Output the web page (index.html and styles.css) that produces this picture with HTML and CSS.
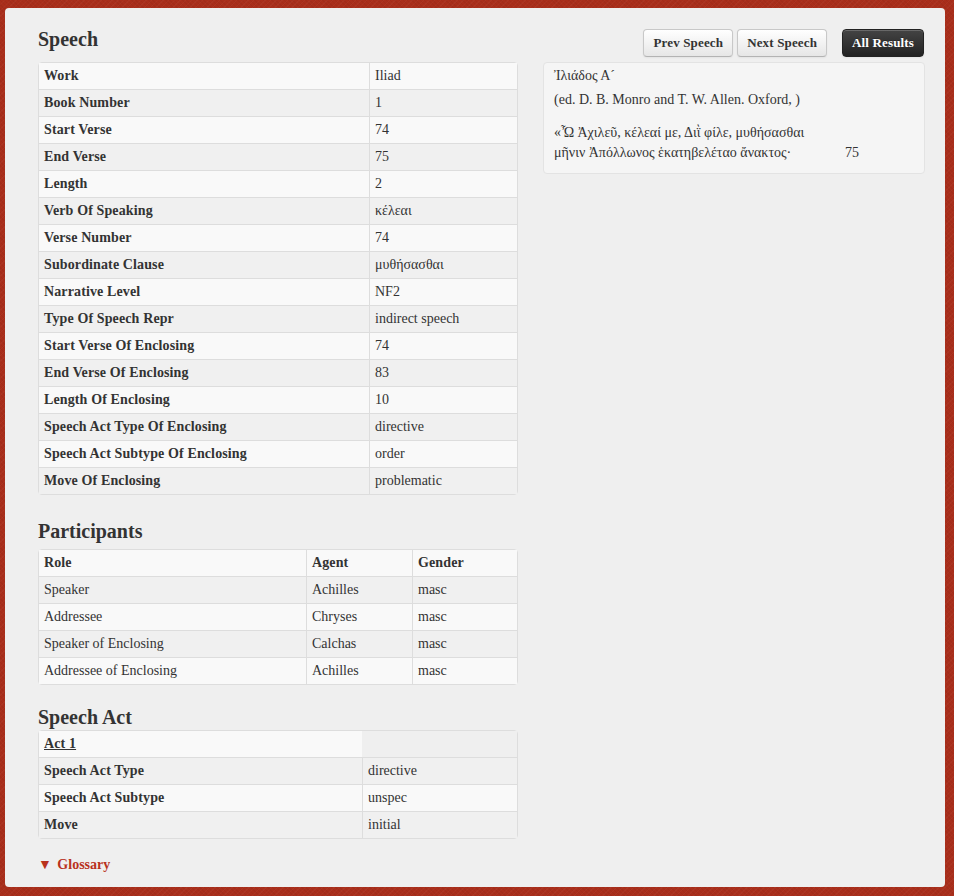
FILE: index.html
```html
<!DOCTYPE html>
<html>
<head>
<meta charset="utf-8">
<link rel="stylesheet" href="styles.css">
</head>
<body>
<div class="page">
  <div class="left">
    <h3 class="h-speech">Speech</h3>
    <table class="tbl kv">
      <tr><th>Work</th><td>Iliad</td></tr>
      <tr><th>Book Number</th><td>1</td></tr>
      <tr><th>Start Verse</th><td>74</td></tr>
      <tr><th>End Verse</th><td>75</td></tr>
      <tr><th>Length</th><td>2</td></tr>
      <tr><th>Verb Of Speaking</th><td>κέλεαι</td></tr>
      <tr><th>Verse Number</th><td>74</td></tr>
      <tr><th>Subordinate Clause</th><td>μυθήσασθαι</td></tr>
      <tr><th>Narrative Level</th><td>NF2</td></tr>
      <tr><th>Type Of Speech Repr</th><td>indirect speech</td></tr>
      <tr><th>Start Verse Of Enclosing</th><td>74</td></tr>
      <tr><th>End Verse Of Enclosing</th><td>83</td></tr>
      <tr><th>Length Of Enclosing</th><td>10</td></tr>
      <tr><th>Speech Act Type Of Enclosing</th><td>directive</td></tr>
      <tr><th>Speech Act Subtype Of Enclosing</th><td>order</td></tr>
      <tr><th>Move Of Enclosing</th><td>problematic</td></tr>
    </table>

    <h3 class="h-part">Participants</h3>
    <table class="tbl parts">
      <tr><th class="c-role">Role</th><th class="c-agent">Agent</th><th>Gender</th></tr>
      <tr><td>Speaker</td><td>Achilles</td><td>masc</td></tr>
      <tr><td>Addressee</td><td>Chryses</td><td>masc</td></tr>
      <tr><td>Speaker of Enclosing</td><td>Calchas</td><td>masc</td></tr>
      <tr><td>Addressee of Enclosing</td><td>Achilles</td><td>masc</td></tr>
    </table>

    <h3 class="h-act">Speech Act</h3>
    <table class="tbl acts">
      <tr class="act-head"><th class="act-title"><u>Act 1</u></th><td class="empty"></td></tr>
      <tr><th>Speech Act Type</th><td>directive</td></tr>
      <tr><th>Speech Act Subtype</th><td>unspec</td></tr>
      <tr><th>Move</th><td>initial</td></tr>
    </table>

    <div class="glossary"><span class="tri">▼</span> Glossary</div>
  </div>

  <div class="right">
    <div class="btnbar">
      <span class="btn">Prev Speech</span>
      <span class="btn">Next Speech</span>
      <span class="btn btn-dark">All Results</span>
    </div>
    <div class="well">
      <div class="w-title">Ἰλιάδος Α´</div>
      <div class="w-ed">(ed. D. B. Monro and T. W. Allen. Oxford, )</div>
      <div class="poem">
        <span>«Ὦ Ἀχιλεῦ, κέλεαί με, Διῒ φίλε, μυθήσασθαι</span><span></span>
        <span>μῆνιν Ἀπόλλωνος ἑκατηβελέταο ἄνακτος·</span><span>75</span>
      </div>
    </div>
  </div>
</div>
</body>
</html>
```

FILE: styles.css
```css
html, body {
  margin: 0;
  padding: 0;
}
body {
  background-color: #a92e1b;
  background-image:
    repeating-linear-gradient(45deg, rgba(0,0,0,0.04) 0 1px, transparent 1px 3px),
    repeating-linear-gradient(-45deg, rgba(255,255,255,0.03) 0 1px, transparent 1px 4px);
  font-family: "Liberation Serif", "Times New Roman", serif;
  font-size: 14px;
  line-height: 20px;
  color: #333;
  height: 896px;
  overflow: hidden;
}
.page {
  box-sizing: border-box;
  margin: 8px 0 0 5px;
  width: 940px;
  height: 879px;
  background: #efefef;
  border-radius: 4px;
  padding: 19px 20px 0 33px;
  display: flex;
  gap: 25px;
}
.left {
  width: 480px;
  flex: none;
}
.right {
  width: 382px;
  flex: none;
}
h3 {
  margin: 0;
  font-size: 20px;
  line-height: 24px;
  font-weight: bold;
  color: #333;
}
.h-speech { margin-bottom: 11px; }
.h-part { margin-top: 24px; margin-bottom: 6px; }
.h-act { margin-top: 20px; margin-bottom: 1px; }

.tbl {
  width: 480px;
  border-collapse: separate;
  border-spacing: 0;
  border: 1px solid #dddddd;
  border-radius: 4px;
  table-layout: fixed;
}
.tbl th, .tbl td {
  padding: 4px 5px;
  line-height: 18px;
  font-size: 14px;
  text-align: left;
  vertical-align: top;
  border-top: 1px solid #dddddd;
  color: #333;
}
.tbl th { font-weight: bold; letter-spacing: 0.12px; }
.tbl td { font-weight: normal; }
.tbl tr:first-child th, .tbl tr:first-child td { border-top: 0; }
.tbl th + th, .tbl th + td, .tbl td + td { border-left: 1px solid #dddddd; }
.tbl tr:nth-child(odd) th, .tbl tr:nth-child(odd) td { background: #f9f9f9; }
.tbl tr:nth-child(even) th, .tbl tr:nth-child(even) td { background: #f0f0f0; }

.kv th { width: 320px; }
.parts .c-role { width: 257px; }
.parts .c-agent { width: 95px; }
.acts th { width: 313px; }
.tbl tr.act-head td.empty { background: #efefef; border-left: 0; }
.act-title u { text-decoration: underline; }

.glossary {
  margin-top: 16px;
  color: #b9321d;
  font-weight: bold;
  font-size: 14px;
  line-height: 20px;
}
.tri { margin-right: 2px; }

.btnbar {
  margin-top: 2px;
  height: 28px;
  display: flex;
  justify-content: flex-end;
  padding-right: 1px;
}
.btn {
  box-sizing: border-box;
  height: 28px;
  padding: 4px 9px;
  font-size: 13px;
  letter-spacing: 0.15px;
  line-height: 18px;
  font-weight: bold;
  color: #333;
  border: 1px solid #c8c8c8;
  border-bottom-color: #b3b3b3;
  border-radius: 4px;
  background: linear-gradient(#ffffff, #e6e6e6);
  box-shadow: inset 0 1px 0 rgba(255,255,255,0.2), 0 1px 2px rgba(0,0,0,0.05);
  margin-left: 4px;
  white-space: nowrap;
}
.btn-dark {
  margin-left: 15px;
  color: #fff;
  border-color: #222;
  background: linear-gradient(#444444, #222222);
  text-shadow: 0 -1px 0 rgba(0,0,0,0.25);
}
.well {
  margin-top: 5px;
  box-sizing: border-box;
  height: 112px;
  background: #f5f5f5;
  border: 1px solid #e3e3e3;
  border-radius: 4px;
  padding: 3px 10px 0 10px;
  font-size: 14px;
  line-height: 20px;
  color: #333;
}
.w-ed { margin-top: 4px; }
.poem {
  margin-top: 13px;
  display: grid;
  grid-template-columns: 291px auto;
}
```
